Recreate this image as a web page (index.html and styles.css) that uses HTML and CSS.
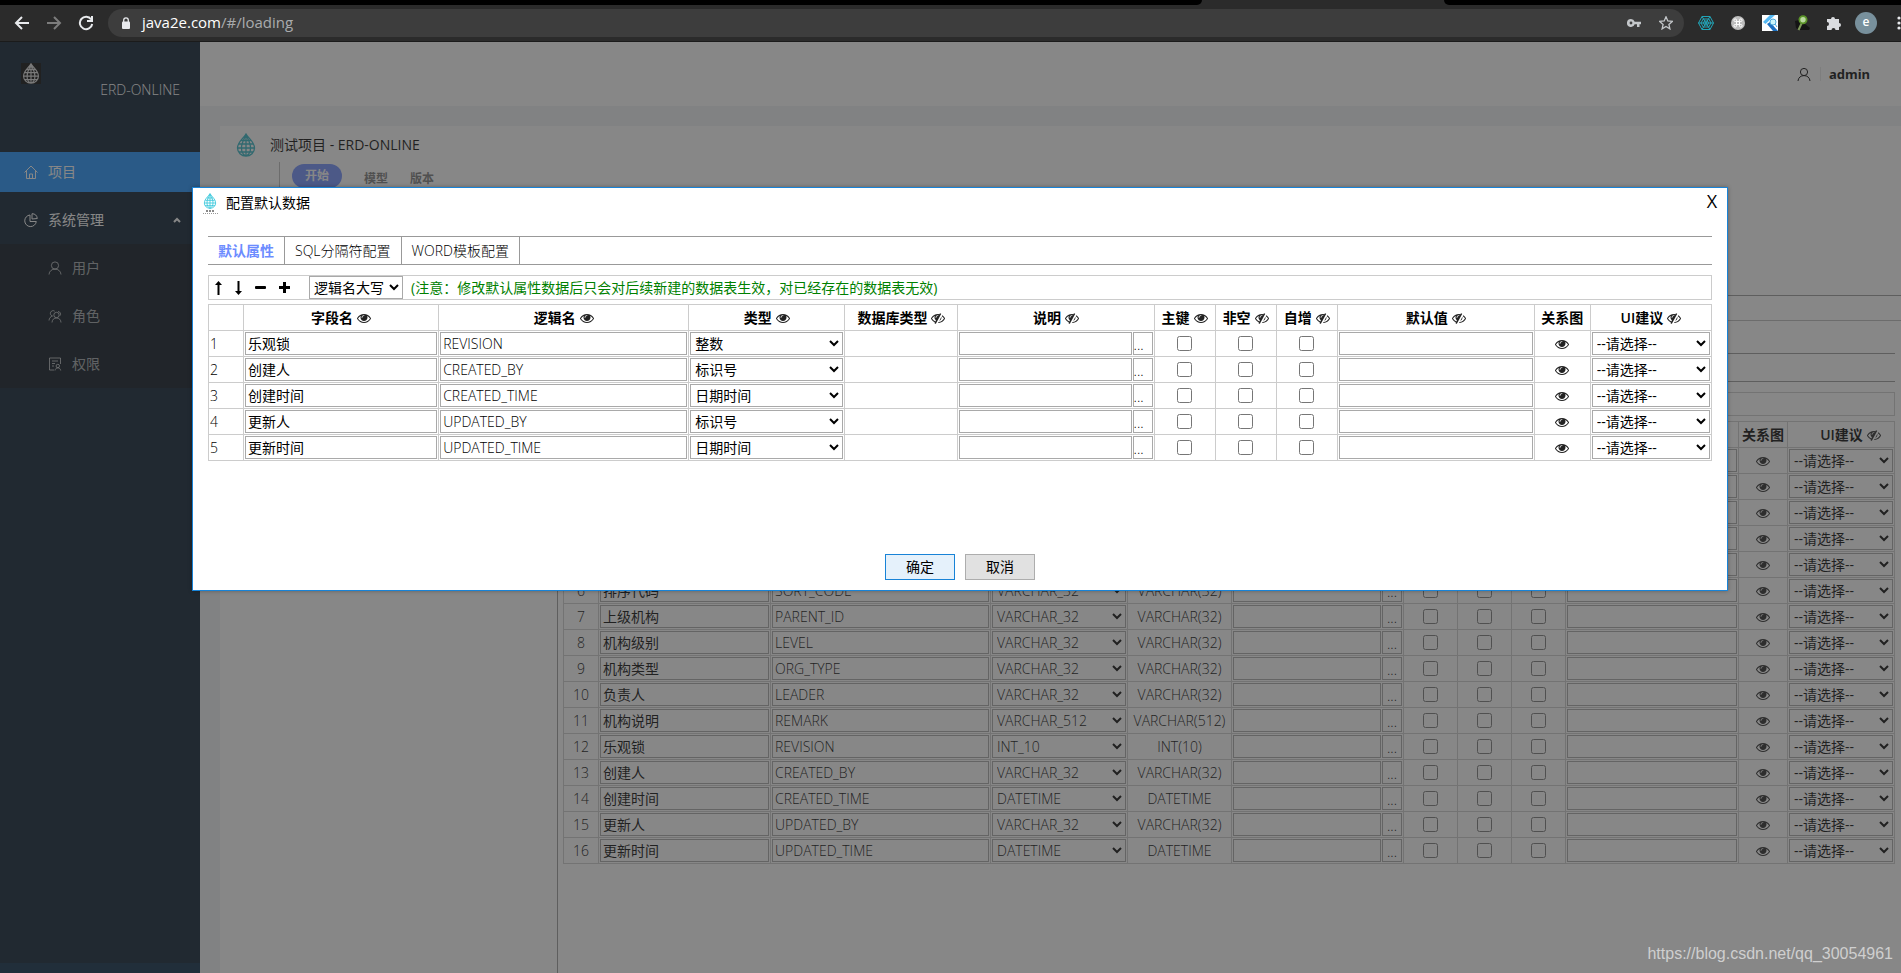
FILE: index.html
```html
<!DOCTYPE html>
<html lang="zh-CN">
<head>
<meta charset="utf-8">
<title>ERD-ONLINE</title>
<link rel="stylesheet" href="styles.css">
</head>
<body>
<svg class="sprite" aria-hidden="true">
  <symbol id="eye" viewBox="0 0 1792 1792"><path d="M1664 960q-152-236-381-353 61 104 61 225 0 185-131.500 316.500t-316.500 131.500-316.500-131.500-131.500-316.500q0-121 61-225-229 117-381 353 133 205 333.500 326.500t434.500 121.500 434.500-121.500 333.500-326.500zm-720-384q0-20-14-34t-34-14q-125 0-214.500 89.500t-89.500 214.500q0 20 14 34t34 14 34-14 14-34q0-86 61-147t147-61q20 0 34-14t14-34zm848 384q0 34-20 69-140 230-376.500 368.500t-499.500 138.500-499.500-139-376.500-368q-20-35-20-69t20-69q140-229 376.500-368t499.500-139 499.500 139 376.500 368q20 35 20 69z"/></symbol>
  <symbol id="eye-slash" viewBox="0 0 1792 1792"><path d="M555 1335l78-141q-87-63-136-159t-49-203q0-121 61-225-229 117-381 353 167 258 427 375zm389-759q0-20-14-34t-34-14q-125 0-214.500 89.500t-89.500 214.500q0 20 14 34t34 14 34-14 14-34q0-86 61-147t147-61q20 0 34-14t14-34zm363-191q0 7-1 9-106 189-316 567t-315 566l-49 89q-10 16-28 16-12 0-134-70-16-10-16-28 0-12 44-87-143-65-263.500-173t-208.500-245q-20-31-20-69t20-69q153-235 380-371t496-136q89 0 180 17l54-97q10-16 28-16 5 0 18 6t31 15.500 33 18.500 31.500 18.500 19.500 11.500q16 10 16 27zm37 447q0 139-79 253.500t-209 164.500l280-502q8 45 8 84zm448 128q0 35-20 69-39 64-109 145-150 172-347.500 267t-419.500 95l74-132q212-18 392.500-137t301.500-307q-115-179-282-294l63-112q95 64 182.500 153t144.500 182q20 34 20 69z"/></symbol>
  <symbol id="drop" viewBox="0 0 20 24"><path d="M10 1C7 6 1.500 9 1.500 15a8.500 8 0 0 0 17 0C18.500 9 13 6 10 1zM10 1v22M10 2C7 8 5.500 10 5.500 15c0 4 2 7 4.500 8M10 2c3 6 4.500 8 4.500 13 0 4-2 7-4.500 8M5.500 7.500h9M3 11h14M1.500 15h17M2.500 19h15" fill="none" stroke="currentColor" stroke-width="1.300"/></symbol>
  <symbol id="user" viewBox="0 0 14 14"><circle cx="7" cy="4.500" r="3.600"/><path d="M1 13.500c.2-3.400 2.800-5.400 6-5.400s5.800 2 6 5.400"/></symbol>
</svg>

<header class="browser">
  <div class="tabstrip"><span class="tabs-before"></span><span class="tabs-after"></span></div>
  <div class="navbar">
    <div class="nav-buttons">
      <button class="nav-button" aria-label="Back"><svg width="16" height="16" viewBox="0 0 16 16"><path d="M15 8H2M8 2L2 8l6 6"/></svg></button>
      <button class="nav-button nav-button-off" aria-label="Forward"><svg width="16" height="16" viewBox="0 0 16 16"><path d="M1 8h13M8 2l6 6-6 6"/></svg></button>
      <button class="nav-button" aria-label="Reload"><svg width="16" height="16" viewBox="0 0 16 16"><path d="M13.200 4.500A6.200 6.200 0 1 0 14.200 9M14 1v5H9"/></svg></button>
    </div>
    <div class="omnibox">
      <svg class="lock" width="10" height="13" viewBox="0 0 10 13"><rect x="1" y="4.500" width="8" height="7.500" rx="1" fill="#e8eaed"/><path d="M2.700 5V3.200a2.300 2.300 0 0 1 4.600 0V5" fill="none" stroke="#e8eaed" stroke-width="1.300"/></svg>
      <span class="url"><b>java2e.com</b>/#/loading</span>
      <svg width="14" height="10" viewBox="0 0 14 10"><path d="M4 1a4 4 0 1 0 3.700 5.300H10V9h2.500V6.300H14V3.700H7.700A4 4 0 0 0 4 1zm0 2.600a1.400 1.400 0 1 1 0 2.800 1.400 1.400 0 0 1 0-2.800z" fill="#c4c7ca" fill-rule="evenodd"/></svg>
      <svg class="star" width="14" height="14" viewBox="0 0 14 14"><path d="M7 .800l1.800 4.200 4.500.400-3.400 3 1 4.500L7 10.500l-3.900 2.400 1-4.500-3.400-3L5.200 5z" fill="none" stroke="#c4c7ca" stroke-width="1.300"/></svg>
    </div>
    <div class="extensions">
      <svg width="16" height="16" viewBox="0 0 16 16" fill="none" stroke="#22a5b8"><path d="M4 1.500h8L15.500 8 12 14.500H4L.5 8zM5.200 4h5.600L13 8l-2.200 4H5.200L3 8zM6.500 6h3L10.600 8 9.500 10h-3L5.400 8zM4 1.500l8 13M12 1.500l-8 13M.5 8h15"/></svg>
      <svg width="16" height="16" viewBox="0 0 16 16"><circle cx="8" cy="8" r="7" fill="#bdbdbd"/><path d="M6.500 6.500h3v3h-3zM6.500 6.500H5.200a1.300 1.300 0 1 1 1.300-1.300zM9.500 6.500V5.200a1.300 1.300 0 1 1 1.300 1.300zM9.500 9.500h1.300a1.300 1.300 0 1 1-1.300 1.300zM6.500 9.500v1.300a1.300 1.300 0 1 1-1.300-1.300z" fill="none" stroke="#fff"/></svg>
      <svg width="16" height="16" viewBox="0 0 16 16"><path d="M0 0h16v16H0z" fill="#fff"/><path d="M8 0h5L3.500 9 1 7z" fill="#55b9f3"/><path d="M5 9l3-2 8 9h-5z" fill="#1b6fc0"/><circle cx="11" cy="7" r="3" fill="#c8f4fa" stroke="#4fa8d8"/><path d="M13 9l2 3" stroke="#4fa8d8"/></svg>
      <svg width="16" height="16" viewBox="0 0 16 16"><path d="M1 6l1 7 3 2h10l1-2-5-4-6-4z" fill="#141414"/><path d="M7.500 8.500L4.500 15" stroke="#7f9a5a" stroke-width="2"/><circle cx="9" cy="4.800" r="3.600" fill="#b9d8a0" stroke="#5b9428" stroke-width="1.800"/></svg>
      <svg width="16" height="16" viewBox="0 0 16 16"><path d="M1 4h4a2 2 0 1 1 4 0h4v4a2 2 0 1 1 0 4v3H9.500a2 2 0 0 0-4 0H1v-4a2 2 0 0 0 0-4z" fill="#dadce0"/></svg>
      <span class="avatar">e</span>
      <svg width="4" height="14" viewBox="0 0 4 14" fill="#e8eaed"><circle cx="2" cy="2" r="1.600"/><circle cx="2" cy="7" r="1.600"/><circle cx="2" cy="12" r="1.600"/></svg>
    </div>
  </div>
</header>

<div class="viewport">
  <div class="app">
    <aside class="sidebar">
      <div class="brand">
        <svg class="brand-logo" width="20" height="21"><use href="#drop"/></svg>
        <span class="brand-name">ERD-ONLINE</span>
      </div>
      <nav class="menu">
        <a class="menu-item menu-item-selected" href="#project"><svg class="line-icon" width="14" height="14" viewBox="0 0 14 14"><path d="M.5 7.500L7 1l6.500 6.500M2.500 6v7.500h9V6M5.500 13.500V9h3v4.500"/></svg>项目</a>
        <a class="menu-item menu-item-open" href="#system"><svg class="line-icon" width="14" height="14" viewBox="0 0 14 14"><path d="M6 2a5.800 5.800 0 1 0 6.300 6.500H6zM8 .700V6l5.300-.500A5.500 5.500 0 0 0 8 .700z"/></svg>系统管理<svg class="menu-caret" width="8" height="6" viewBox="0 0 8 6"><path d="M1 5l3-3 3 3" fill="none" stroke="#fff" stroke-width="2"/></svg></a>
        <div class="submenu">
          <a class="menu-item" href="#users"><svg class="line-icon" width="14" height="14"><use href="#user"/></svg>用户</a>
          <a class="menu-item" href="#roles"><svg class="line-icon" width="14" height="14" viewBox="0 0 14 14"><circle cx="8.500" cy="6" r="2.700"/><path d="M4 13.500c.2-3 2-4.500 4.500-4.500s4.300 1.500 4.500 4.500M4.500 7a2.700 2.700 0 1 1 2.200-4.800M1 11.500C1.200 9 2.500 7.700 4.500 7M10 2.500a2.600 2.600 0 0 1 2 4.200"/></svg>角色</a>
          <a class="menu-item" href="#permissions"><svg class="line-icon" width="14" height="14" viewBox="0 0 14 14"><path d="M6 13H1.500V1h11v6M4 4h6M4 6.500h3M4 9h2"/><circle cx="9.800" cy="9" r="1.700"/><path d="M7 13.500c.3-1.800 1.300-2.600 2.800-2.600s2.600.8 2.900 2.600"/></svg>权限</a>
        </div>
      </nav>
      <div class="sidebar-trigger"></div>
    </aside>
    <div class="main">
      <div class="topbar">
        <svg class="line-icon" width="14" height="15"><use href="#user"/></svg>
        <span class="topbar-name">admin</span>
      </div>
      <div class="card">
        <div class="card-title"><svg class="card-logo" width="20" height="24"><use href="#drop"/></svg>测试项目 - ERD-ONLINE</div>
        <div class="card-tabs">
          <button class="pill">开始</button>
          <button class="plain">模型</button>
          <button class="plain">版本</button>
        </div>
        <div class="workspace">
          <div class="tree"></div>
          <div class="editor">
            <div class="editor-tools"></div>
            <div class="editor-body">
              <div class="editor-tabs"></div>
              <div class="editor-bar"></div>
              <table class="grid grid-entity" id="entity-table">
                <colgroup><col class="e1"><col class="e2"><col class="e3"><col class="e4"><col class="e5"><col class="e6"><col class="e7"><col class="e7"><col class="e7"><col class="e8"><col class="e9"><col class="e10"></colgroup>
              </table>
            </div>
          </div>
        </div>
      </div>
    </div>
  </div>

  <div class="mask"></div>

  <section class="dialog" role="dialog" aria-labelledby="dialog-title">
    <div class="dialog-head">
      <span class="dialog-logo"><svg width="14" height="16"><use href="#drop"/></svg><i class="logo-name"></i><i></i></span>
      <h1 class="dialog-title" id="dialog-title">配置默认数据</h1>
      <button class="dialog-close" aria-label="关闭">X</button>
    </div>
    <div class="dialog-body">
      <div class="tabs">
        <button class="tab tab-active">默认属性</button>
        <button class="tab">SQL分隔符配置</button>
        <button class="tab">WORD模板配置</button>
      </div>
      <div class="toolbar">
        <div class="toolbar-icons">
          <button aria-label="上移"><svg width="7" height="14" viewBox="0 0 7 14"><path d="M3.500 0L7 4H4.500v10h-2V4H0z"/></svg></button>
          <button aria-label="下移"><svg width="7" height="14" viewBox="0 0 7 14"><path d="M3.500 14L0 10h2.500V0h2v10H7z"/></svg></button>
          <button aria-label="删除"><svg width="11" height="14" viewBox="0 0 11 14"><rect y="5" width="11" height="3" rx="1"/></svg></button>
          <button aria-label="新增"><svg width="11" height="14" viewBox="0 0 11 14"><path d="M4 1h3v4h4v3H7v4H4V8H0V5h4z"/></svg></button>
        </div>
        <select class="case-select" aria-label="逻辑名大小写"><option>逻辑名大写</option></select>
        <span class="note">(注意：修改默认属性数据后只会对后续新建的数据表生效，对已经存在的数据表无效)</span>
      </div>
      <table class="grid grid-default" id="default-table">
        <colgroup><col class="d1"><col class="d2"><col class="d3"><col class="d4"><col class="d5"><col class="d6"><col class="d7"><col class="d7"><col class="d7"><col class="d8"><col class="d9"><col class="d10"></colgroup>
      </table>
    </div>
    <div class="dialog-foot">
      <button class="btn btn-primary">确定</button>
      <button class="btn">取消</button>
    </div>
  </section>

  <div class="watermark">https://blog.csdn.net/qq_30054961</div>
</div>
<script src="app.js"></script>
</body>
</html>
```
FILE: styles.css
```css
* { box-sizing: border-box; }

body {
  margin: 0;
  height: 100vh;
  display: flex;
  flex-direction: column;
  overflow: hidden;
  font: 300 14px/20px "Open Sans", "Noto Sans CJK SC", sans-serif;
  color: #000;
}

button, input, select { font: inherit; color: inherit; }
button { border: 0; padding: 0; background: none; }
a { color: inherit; text-decoration: none; }
svg { flex: none; display: block; }
.sprite { position: absolute; width: 0; height: 0; }
.line-icon { fill: none; stroke: currentColor; stroke-width: 1; overflow: visible; }

/* Browser bar */
.browser { flex: none; background: #2b2b2b; border-bottom: 1px solid #1b1b1b; }
.tabstrip { height: 5px; display: flex; justify-content: space-between; gap: 242px; }
.tabs-before { flex: 1; background: #000; border-bottom-right-radius: 5px; }
.tabs-after { width: 457px; background: #000; border-bottom-left-radius: 5px; }
.navbar { height: 36px; display: flex; align-items: center; }
.nav-buttons { display: flex; gap: 16px; padding: 0 14px; width: 108px; }
.nav-button svg { fill: none; stroke: #e8eaed; stroke-width: 2; }
.nav-button-off svg { stroke: #7c7c7c; }
.omnibox {
  flex: 1;
  height: 28px;
  border-radius: 14px;
  background: #3d3d3d;
  display: flex;
  align-items: center;
  padding: 0 11px 0 13px;
}
.url { flex: 1; margin-left: 11px; color: #a9abad; font-size: 15px; font-weight: 400; line-height: 18px; padding-bottom: 2px; }
.url b { font-weight: 400; color: #fff; }
.star { margin-left: 18px; }
.extensions { display: flex; align-items: center; gap: 16px; padding-left: 14px; }
.avatar {
  width: 22px;
  height: 22px;
  margin: 0 4px 0 -3px;
  border-radius: 50%;
  background: #78909c;
  color: #fff;
  font-size: 12px;
  font-weight: 600;
  line-height: 20px;
  text-align: center;
}

/* Application */
.viewport { flex: 1; min-height: 0; position: relative; overflow: hidden; }
.app { height: 100%; display: flex; }
.sidebar {
  flex: none;
  width: 200px;
  background: #001529;
  color: rgba(255, 255, 255, .65);
  font-weight: 400;
  display: flex;
  flex-direction: column;
}
.brand { height: 110px; padding: 21px 20px 0 21px; display: flex; justify-content: space-between; }
.brand-logo { background: #000; color: #ddd; }
.brand-name { padding-top: 17px; font-weight: 300; color: #fff; }
.menu { flex: 1; }
.menu-item { height: 40px; margin-bottom: 8px; padding-left: 24px; display: flex; align-items: center; gap: 10px; }
.menu-item-selected { background: #1890ff; color: #fff; }
.menu-item-open { color: #fff; margin-bottom: 4px; }
.menu-caret { margin: 0 19px 0 auto; }
.submenu { height: 144px; background: #000c17; padding: 4px 0; }
.submenu .menu-item { padding-left: 48px; }
.submenu .menu-item:last-child { margin-bottom: 0; }
.sidebar-trigger { height: 10px; background: #002140; }

.main { flex: 1; min-width: 0; display: flex; flex-direction: column; background: #f0f2f5; }
.topbar { height: 64px; background: #fff; display: flex; align-items: center; justify-content: flex-end; gap: 9px; padding-right: 31px; }
.topbar-name { border-left: 1px solid #e8e8e8; padding-left: 8px; font: 700 13px/14px "Noto Sans", sans-serif; }
.card { flex: 1; min-height: 0; margin: 20px 0 0 20px; background: #fff; display: flex; flex-direction: column; }
.card-title { height: 36px; padding: 2px 0 0 16px; display: flex; align-items: center; gap: 14px; font-weight: 400; }
.card-logo { color: #2ab3c4; }
.card-tabs { height: 44px; margin-left: 59px; padding: 2px 0 0 12px; border-left: 1px solid #bbb; display: flex; gap: 22px; align-items: flex-start; font-size: 12px; font-weight: 700; }
.pill { width: 50px; height: 24px; border-radius: 12px; background: #6d8cff; color: #fff; }
.plain { height: 30px; color: #777; }
.workspace { flex: 1; display: flex; margin-top: 47px; }
.tree { width: 338px; border-right: 1px solid #999; }
.editor { flex: 1; min-width: 0; padding-top: 42px; }
.editor-tools { height: 26px; border-top: 1px solid #999; border-bottom: 1px solid #bbb; }
.editor-body { padding: 32px 6px 0 5px; }
.editor-tabs { height: 29px; border-top: 1px solid #999; border-bottom: 1px solid #999; }
.editor-bar { height: 24px; margin: 10px 0 5px; border: 1px solid #ccc; }

/* Tables of fields */
.grid { width: 100%; table-layout: fixed; border-collapse: collapse; }
.grid th, .grid td { height: 26px; border: 1px solid #ccc; padding: 1px; white-space: nowrap; }
.grid th { font-weight: 600; text-align: center; }
.grid svg { width: 14px; height: 14px; fill: #222; }
.head-label { display: flex; align-items: center; justify-content: center; gap: 4px; line-height: 20px; }
.grid input[type="text"], .grid select, .more {
  display: block;
  width: 100%;
  height: 23px;
  margin: 0;
  border: 1px solid #a9a9a9;
  border-radius: 0;
  background: #fff;
}
.grid input[type="text"] { padding: 0 2px; }
.grid input[type="checkbox"] { display: block; width: 15px; height: 15px; margin: 0 auto; }
.grid .eye-cell svg { margin: 0 auto; }
.grid .name, .grid .hint, .grid-default select { font-weight: 400; }
.grid input.name[type="text"] { padding-bottom: 2px; }
.remark { display: grid; grid-template-columns: 1fr 20px; gap: 1px; }
.more { padding: 3px 0 0; text-align: left; line-height: 18px; }
.grid .center { text-align: center; }
.grid-entity .more { text-align: center; }
.grid-entity th:last-child { padding-left: 20px; }

.d1 { width: 35px; } .d2 { width: 195px; } .d3 { width: 250px; } .d4 { width: 156px; }
.d5 { width: 113px; } .d6 { width: 196px; } .d7 { width: 61px; } .d8 { width: 197px; }
.d9 { width: 56px; } .d10 { width: 121px; }
.e1 { width: 35px; } .e2 { width: 172px; } .e3 { width: 220px; } .e4 { width: 137px; }
.e5 { width: 104px; } .e6 { width: 172px; } .e7 { width: 54px; } .e8 { width: 173px; }
.e9 { width: 49px; } .e10 { width: 107px; }

.mask { position: absolute; inset: 0; background: rgba(55, 55, 55, .6); }

/* Dialog */
.dialog {
  position: absolute;
  top: 145px;
  left: 192px;
  right: 173px;
  border: 1px solid #1883d7;
  background: #fff;
  box-shadow: 0 0 4px rgba(0, 0, 0, .3);
}
.dialog-head { height: 48px; padding: 5px 8px 0 9px; display: flex; align-items: flex-start; gap: 8px; }
.dialog-logo { width: 16px; color: #3cc8dc; display: flex; flex-direction: column; align-items: center; gap: 1px; }
.dialog-logo i { width: 15px; border-top: 1px dotted #999; }
.dialog-logo .logo-name { width: 8px; border-top: 2px dotted #888; }
.dialog-title { flex: 1; margin: 0; font-size: 14px; line-height: 20px; font-weight: 400; }
.dialog-close { width: 14px; font-size: 18px; line-height: 16px; font-weight: 400; }
.dialog-body { padding: 0 15px; }
.tabs { display: flex; height: 29px; border-top: 1px solid #999; border-bottom: 1px solid #999; }
.tab { padding: 0 10px; border-right: 1px solid #999; }
.tab-active { color: #6d8cff; font-weight: 700; }
.toolbar { height: 25px; margin: 10px 0 4px; border: 1px solid #ccc; display: flex; align-items: center; }
.toolbar-icons { width: 100px; padding-left: 6px; display: flex; align-items: center; gap: 13px; }
.case-select { width: 94px; height: 23px; border: 1px solid #a9a9a9; border-radius: 0; background: #fff; font-weight: 400; }
.note { margin-left: 8px; color: #008000; font-weight: 400; }
.dialog-foot { display: flex; justify-content: center; gap: 10px; padding: 93px 0 10px; }
.btn { width: 70px; height: 26px; border: 1px solid #adadad; background: #e1e1e1; font-weight: 400; }
.btn-primary { border-color: #1883d7; background: #e5f1fb; }

.watermark {
  position: absolute;
  right: 8px;
  bottom: 9px;
  color: #cfcfcf;
  font: 400 16px/20px "Liberation Sans", sans-serif;
}
```
FILE: app.js
```js
const columns = [
  ["", ""], ["字段名", "eye"], ["逻辑名", "eye"], ["类型", "eye"], ["数据库类型", "eye-slash"],
  ["说明", "eye-slash"], ["主键", "eye"], ["非空", "eye-slash"], ["自增", "eye-slash"],
  ["默认值", "eye-slash"], ["关系图", ""], ["UI建议", "eye-slash"]
];

const defaults = [
  ["乐观锁", "REVISION", "整数", ""],
  ["创建人", "CREATED_BY", "标识号", ""],
  ["创建时间", "CREATED_TIME", "日期时间", ""],
  ["更新人", "UPDATED_BY", "标识号", ""],
  ["更新时间", "UPDATED_TIME", "日期时间", ""]
];

const v32 = ["VARCHAR_32", "VARCHAR(32)"];
const date = ["DATETIME", "DATETIME"];
const blank = ["", "", "", ""];
const entity = [
  blank, blank, blank, blank, blank,
  ["排序代码", "SORT_CODE", ...v32],
  ["上级机构", "PARENT_ID", ...v32],
  ["机构级别", "LEVEL", ...v32],
  ["机构类型", "ORG_TYPE", ...v32],
  ["负责人", "LEADER", ...v32],
  ["机构说明", "REMARK", "VARCHAR_512", "VARCHAR(512)"],
  ["乐观锁", "REVISION", "INT_10", "INT(10)"],
  ["创建人", "CREATED_BY", ...v32],
  ["创建时间", "CREATED_TIME", ...date],
  ["更新人", "UPDATED_BY", ...v32],
  ["更新时间", "UPDATED_TIME", ...date]
];

const icon = name => name ? `<svg><use href="#${name}"/></svg>` : "";
const text = (label, value = "", cls = "field") =>
  `<input type="text" class="${cls}" aria-label="${label}" value="${value}">`;
const check = label => `<td><input type="checkbox" aria-label="${label}"></td>`;

function fill(id, rows, numberClass) {
  const head = columns.map(([label, mark]) =>
    `<th><span class="head-label">${label}${icon(mark)}</span></th>`).join("");
  const body = rows.map(([name, code, type, dbType], i) => `<tr>
    <td class="${numberClass}">${i + 1}</td>
    <td>${text("字段名", name, "name")}</td>
    <td>${text("逻辑名", code)}</td>
    <td><select aria-label="类型"><option>${type}</option></select></td>
    <td class="center">${dbType}</td>
    <td><div class="remark">${text("说明")}<button class="more">...</button></div></td>
    ${check("主键")}${check("非空")}${check("自增")}
    <td>${text("默认值")}</td>
    <td class="eye-cell">${icon("eye")}</td>
    <td><select class="hint" aria-label="UI建议"><option>--请选择--</option></select></td>
  </tr>`).join("");
  document.getElementById(id).insertAdjacentHTML("beforeend",
    `<thead><tr>${head}</tr></thead><tbody>${body}</tbody>`);
}

fill("default-table", defaults, "number");
fill("entity-table", entity, "center");
```
